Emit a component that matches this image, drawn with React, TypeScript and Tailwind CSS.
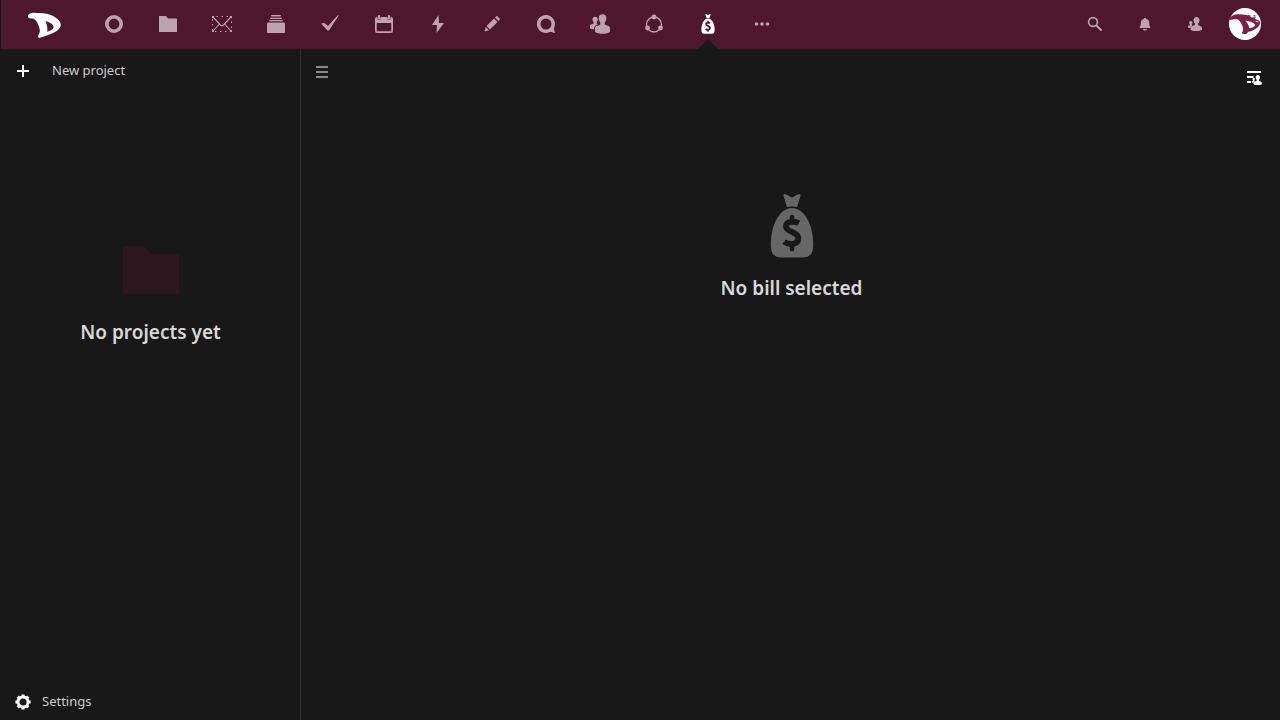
import React from "react";

type IconProps = { className?: string };

function Icon({ className = "size-5", box = 20, children }: IconProps & { box?: number; children: React.ReactNode }) {
  return (
    <svg className={className} viewBox={`0 0 ${box} ${box}`} fill="currentColor" aria-hidden="true">
      {children}
    </svg>
  );
}

const Logo = () => (
  <svg className="h-8 w-9" viewBox="0 0 36 32" aria-hidden="true">
    <path
      fill="#fff"
      fillRule="evenodd"
      d="M2 7.500C3 5.300 5 4.600 8 4.700C12 5 16 5 19 5.600C23 6.300 26.500 7.500 29.500 9.500C32.500 11.500 34.800 14 34.800 16.800C34.700 20 32 22.500 28 24.600C24 26.600 19 28.500 14 29.800C12.300 30 11.800 29 12.300 27.500C13 25.500 14 24.500 13.900 22.500C13.500 19 12 15.500 10 12.700C8.500 10.700 7 10.300 5 10.500C3 10.500 1.500 9.500 2 7.500ZM19.400 13.300C21 16.500 21.700 20 21.200 23.800C24 23 27 21.500 27.600 19.500C28 17 24 14 19.400 13.300Z"
    />
  </svg>
);

const Ring = () => (
  <Icon>
    <circle cx="10" cy="10" r="7.200" fill="none" stroke="currentColor" strokeWidth="3.600" />
  </Icon>
);
const Folder = () => (
  <Icon>
    <path d="M1.500 2h6.500l2 2.500h8.500a.5.5 0 0 1 .5.5v12.500a.5.5 0 0 1-.5.5h-17a.5.5 0 0 1-.5-.5V2.500a.5.5 0 0 1 .5-.5z" />
  </Icon>
);
const Mail = () => (
  <Icon>
    <g fill="none" stroke="currentColor">
      <path d="M.5 2.500h19v15H.5z" strokeDasharray="1.500 3.500" strokeDashoffset="1" />
      <path d="M1 3l7.500 8q1.500 1.400 3 0L19 3M1 17l6.500-7M19 17l-6.500-7" strokeWidth="1.100" />
    </g>
    <path d="M0 2h2.500L0 4.500zM20 2v2.500L17.500 2zM0 18v-2.500L2.500 18zM20 18h-2.500l2.500-2.500z" />
  </Icon>
);
const Deck = () => (
  <Icon>
    <path d="M5.200 1h9.600v1.500H5.200zM4.200 3.700h11.600v1.300H4.200zM3.200 6h13.600v1.200H3.200zM2 8.500h16l1 1V18a1 1 0 0 1-1 1H2a1 1 0 0 1-1-1V9.500z" />
  </Icon>
);
const Check = () => (
  <Icon>
    <path d="M1 9.500l3.500-.5L8 12l9.500-10.500L19 1 9 16.500H7.500z" />
  </Icon>
);
const Calendar = () => (
  <Icon>
    <path
      fillRule="evenodd"
      d="M3 3h.5v1.500a1.500 1.500 0 0 0 3 0V3h7v1.500a1.500 1.500 0 0 0 3 0V3h.5a2 2 0 0 1 2 2v12a2 2 0 0 1-2 2H3a2 2 0 0 1-2-2V5a2 2 0 0 1 2-2zm-.3 6v7.300q0 1 1 1h12.600q1 0 1-1V9z"
    />
    <rect x="3.900" y="1" width="2.200" height="4.700" rx="1.100" />
    <rect x="13.900" y="1" width="2.200" height="4.700" rx="1.100" />
  </Icon>
);
const Bolt = () => (
  <Icon>
    <path d="M10.500 1L4 11h5l-.5 8L16 9h-5z" />
  </Icon>
);
const Pencil = () => (
  <Icon>
    <path d="M2.500 17.500l1.200-4.600 3.400 3.400zM4.500 12L12 4.500 15.500 8 8 15.500zM13 3.500l1-1q.8-.8 1.600 0l1.900 1.900q.8.800 0 1.600l-1 1z" />
  </Icon>
);
const Talk = () => (
  <Icon>
    <path
      fillRule="evenodd"
      d="M10 1a9 9 0 0 1 7.900 13.300c.1 1.400.5 2.800 1 3.700.2.600-.2 1-.8.900-1.100-.3-2.600-.9-3.700-1.100A9 9 0 1 1 10 1zm0 3.500a5.500 5.500 0 1 0 0 11 5.500 5.500 0 0 0 0-11z"
    />
  </Icon>
);
const Contacts = () => (
  <Icon>
    <path d="M12.600.3c2.300 0 3.800 1.600 3.800 4 0 2-.8 3.200-1.600 4.200V10.500c1 .9 5.200 1.200 5.200 3.500v3.800c-1.500 1.600-4.500 2-7.500 2s-6-.4-7.500-2V14c0-2.300 4.400-2.600 5.300-3.500V8.500c-.8-1-1.600-2.200-1.600-4.200 0-2.400 1.600-4 3.900-4z" />
    <path d="M5.100 2.800c1.600 0 2.700 1.100 2.700 2.700 0 1.300-.6 2.100-1.100 2.700v1.300l1.200.7c-1.900.8-3.600 1.800-3.800 3.800v1.200c-1.600 0-3.200-.3-4.100-1v-2.800c0-1.200 2.600-1.400 3.600-2V8.200c-.5-.6-1.100-1.400-1.100-2.700 0-1.600 1-2.700 2.600-2.700z" />
  </Icon>
);
const Circles = () => (
  <Icon>
    <circle cx="10" cy="10.500" r="7.500" fill="none" stroke="currentColor" strokeWidth="1.300" />
    <circle cx="10" cy="3" r="2.400" />
    <circle cx="3.500" cy="14" r="2.400" />
    <circle cx="16.500" cy="14" r="2.400" />
  </Icon>
);
const MoneyBag = ({ className, sign }: { className?: string; sign: string }) => (
  <Icon className={className} box={64}>
    <path d="M24 0C27 0 30 3 32 3.500C34 3 37 0 40 0C41 1 40.500 2 40 3.500L37 13Q32 11.800 27 13L24 3.500C23.500 2 23 1 24 0Z" />
    <path d="M32 14C46 14 53.200 34 53.200 50C53.200 60 50 63.500 42 63.500H22C14 63.500 10.800 60 10.800 50C10.800 34 18 14 32 14Z" />
    <g fill="none" stroke={sign}>
      <path d="M38.800 29.300C35 27 26 26.800 26 32.500C26 38.500 38.300 37.500 38.300 44.500C38.300 51 29 51.300 24.200 47.700" strokeWidth="5.800" />
      <path d="M32 23v5M32 50v5" strokeLinecap="round" strokeWidth="4.600" />
    </g>
  </Icon>
);
const Dots = () => (
  <Icon>
    <circle cx="4.500" cy="10" r="1.800" />
    <circle cx="10" cy="10" r="1.800" />
    <circle cx="15.500" cy="10" r="1.800" />
  </Icon>
);
const Search = () => (
  <Icon className="size-4" box={16}>
    <circle cx="6" cy="6" r="4.400" fill="none" stroke="currentColor" strokeWidth="1.600" />
    <path d="M9.200 9.200l5.300 5.300" stroke="currentColor" strokeWidth="2" />
  </Icon>
);
const Bell = () => (
  <Icon className="size-4" box={16}>
    <path d="M8 2c.7 0 1.200.4 1.300 1 2 .5 3 2.200 3 4.300 0 2.700.5 3.200 1 3.700v1H2.700v-1c.5-.5 1-1 1-3.700 0-2.100 1-3.800 3-4.300.1-.6.6-1 1.300-1zM6 13h4a2 1.500 0 0 1-4 0z" />
  </Icon>
);

const peopleShape = (
  <>
    <path d="M9.500 1c1.800 0 3 1.300 3 3.200 0 1.600-.7 2.600-1.300 3.400v1.500c.7.900 3.800 1 3.800 3v1.700c-1 1-3.200 1.200-5.700 1.200s-4.800-.3-5.800-1.300V12c0-2 3.600-2 4.300-2.900V7.600c-.6-.8-1.300-1.800-1.300-3.400C6.500 2.300 7.700 1 9.500 1z" />
    <path d="M3.800 5c1 0 1.700.8 1.700 1.800 0 .8-.4 1.300-.7 1.700v.9l.7.400c-1.200.5-2.200 1-2.300 2.200-1 0-1.700-.2-2.200-.6v-1.100c0-.7 1.500-.7 1.800-1v-.8c-.3-.4-.7-.9-.7-1.700 0-1 .7-1.800 1.700-1.800z" />
  </>
);

const Avatar = () => (
  <svg className="size-8" viewBox="0 0 32 32" aria-hidden="true">
    <circle cx="16" cy="16" r="16" fill="#fff" />
    <path
      fill="#7a1f45"
      fillRule="evenodd"
      d="M1 10C3 7 6 6 10 6.300C14 6.500 17 6.600 20 8L23 9.500L27 9.200L26 11C29 12 31 13 31.300 14.800C30.500 18 28.500 20 25.500 21.500C23 23 21 23.500 19 24L17.500 26H13.500L13 24.500C14.500 22.500 14.500 20 13 17C11.800 14.500 10.500 12.500 8.500 11.300C6 11 3 11.500 .8 12ZM16.500 12.800C18.500 15 19.800 17.500 20.300 20.200C23 19.700 26 18.800 26 17C25.700 14.800 21 13.200 16.500 12.800Z"
    />
    <path d="M19 7.800h2.500M24.500 7.800h2" stroke="#7a1f45" strokeWidth="1.200" />
    <path d="M26.500 13.200l3 .8" stroke="#fff" strokeWidth=".8" />
  </svg>
);
const Gear = () => (
  <Icon className="size-4" box={16}>
    <circle cx="8" cy="8" r="5" fill="none" stroke="currentColor" strokeWidth="2.800" />
    <g stroke="currentColor" strokeWidth="3.200" strokeLinejoin="round">
      <path d="M8 .4v3M8 12.600v3M.4 8h3M12.600 8h3M2.700 2.700l2 2M11.300 11.300l2 2M13.300 2.700l-2 2M4.700 11.300l-2 2" />
    </g>
  </Icon>
);

const apps: { name: string; icon: React.ReactNode; active?: boolean }[] = [
  { name: "Dashboard", icon: <Ring /> },
  { name: "Files", icon: <Folder /> },
  { name: "Mail", icon: <Mail /> },
  { name: "Deck", icon: <Deck /> },
  { name: "Tasks", icon: <Check /> },
  { name: "Calendar", icon: <Calendar /> },
  { name: "Activity", icon: <Bolt /> },
  { name: "Notes", icon: <Pencil /> },
  { name: "Talk", icon: <Talk /> },
  { name: "Contacts", icon: <Contacts /> },
  { name: "Circles", icon: <Circles /> },
  { name: "Cospend", icon: <MoneyBag sign="#4f172d" />, active: true },
];

export default function App() {
  return (
    <div className="flex min-h-screen flex-col bg-[#181818] pl-px font-['Noto_Sans',sans-serif] text-[#d8d8d8]">
      <header className="flex h-[49px] justify-between bg-[#4f172d] pr-[10px] text-[#bda3ae]">
        <div className="flex">
          <a href="#home" aria-label="Home" className="flex w-[86px] items-center justify-center pb-px">
            <Logo />
          </a>
          <nav aria-label="Apps" className="flex">
            {apps.map((app) => (
              <a
                key={app.name}
                href={`#${app.name.toLowerCase()}`}
                aria-label={app.name}
                aria-current={app.active ? "page" : undefined}
                className={`relative flex w-[54px] items-center justify-center pb-px ${app.active ? "text-white" : ""}`}
              >
                {app.icon}
                {app.active && (
                  <span className="absolute bottom-0 left-1/2 -translate-x-1/2 border-x-10 border-b-10 border-x-transparent border-b-[#181818]" />
                )}
              </a>
            ))}
            <button type="button" aria-label="More apps" className="flex w-[54px] items-center justify-center pb-px">
              <Dots />
            </button>
          </nav>
        </div>
        <div className="flex">
          <button type="button" aria-label="Search" className="flex w-[50px] items-center justify-center pb-px">
            <Search />
          </button>
          <button type="button" aria-label="Notifications" className="flex w-[50px] items-center justify-center pb-px">
            <Bell />
          </button>
          <button type="button" aria-label="Contacts menu" className="flex w-[50px] items-center justify-center pb-px">
            <Icon className="size-4" box={16}>
              {peopleShape}
            </Icon>
          </button>
          <button type="button" aria-label="Account" className="flex w-[50px] items-center justify-center pb-px">
            <Avatar />
          </button>
        </div>
      </header>

      <div className="flex grow">
        <aside className="flex w-[300px] shrink-0 flex-col border-r border-[#2c2c2c]">
          <button type="button" className="flex h-11 items-center text-[13px] text-[#cccccc]">
            <span className="flex w-11 justify-center text-white">
              <Icon className="size-4" box={16}>
                <path d="M7 2h2v5h5v2H9v5H7V9H2V7h5z" />
              </Icon>
            </span>
            <span className="pl-[7px]">New project</span>
          </button>
          <div className="mt-36 flex flex-col items-center">
            <svg className="size-16 text-[#2e161f]" viewBox="0 0 64 64" fill="currentColor" aria-hidden="true">
              <path d="M5.500 9h19l8 8h26a1.500 1.500 0 0 1 1.500 1.500v37a1.500 1.500 0 0 1-1.500 1.500h-53A1.500 1.500 0 0 1 4 55.500v-45A1.500 1.500 0 0 1 5.500 9z" />
            </svg>
            <h2 className="mt-[15px] text-[19px]/8 font-semibold">No projects yet</h2>
          </div>
          <button type="button" className="mt-auto flex h-9 items-center text-[13px] text-[#cccccc]">
            <span className="flex w-[41px] justify-center pl-[3px] text-white">
              <Gear />
            </span>
            <span>Settings</span>
          </button>
        </aside>

        <main className="flex grow flex-col">
          <div className="flex h-14 items-start justify-between">
            <button
              type="button"
              aria-label="Toggle navigation"
              className="flex h-[46px] w-[42px] items-center justify-center text-[#8c8c8c]"
            >
              <Icon className="size-4" box={16}>
                <path d="M2 2h12v2H2zM2 7h12v2H2zM2 12h12v2H2z" />
              </Icon>
            </button>
            <button type="button" aria-label="Toggle details" className="mr-1 flex h-14 w-11 items-center justify-center text-white">
              <Icon className="size-4" box={16}>
                <path d="M1 2h14v2H1zM1 7h6.500v2H1zM1 12h4v2H1z" />
                <g transform="translate(5 5.300) scale(.72)">{peopleShape}</g>
              </Icon>
            </button>
          </div>
          <div className="mt-[89px] flex flex-col items-center pl-0.5">
            <MoneyBag className="size-16 text-[#666666]" sign="#181818" />
            <h2 className="mt-3.5 text-[19px]/8 font-semibold">No bill selected</h2>
          </div>
        </main>
      </div>
    </div>
  );
}
